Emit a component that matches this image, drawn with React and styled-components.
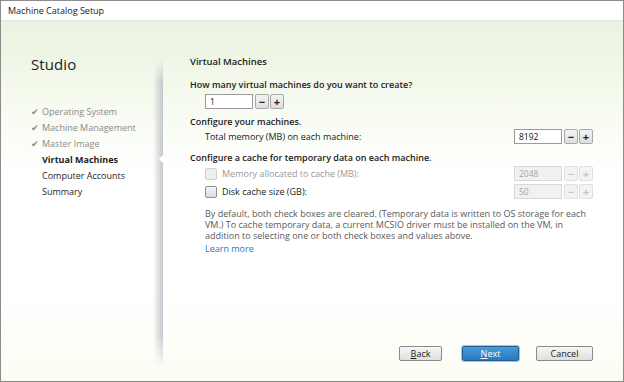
import React from 'react';
import styled, { createGlobalStyle, css } from 'styled-components';

const GlobalStyle = createGlobalStyle`
  html, body {
    margin: 0;
    padding: 0;
    background: #ffffff;
  }
  body {
    font-family: "Open Sans", "Noto Sans", sans-serif;
    font-size: 9px;
    color: #222;
  }
`;

const Window = styled.div`
  width: 622px;
  height: 380px;
  border: 1px solid #8c8c8c;
  display: flex;
  flex-direction: column;
  background: #fff;
`;

const TitleBar = styled.div`
  height: 19px;
  flex-shrink: 0;
  display: flex;
  align-items: center;
  padding-left: 7px;
  font-size: 9px;
  color: #1a1a1a;
  border-bottom: 1px solid #e6e9e2;
`;

const Body = styled.div`
  flex: 1;
  display: flex;
  background: linear-gradient(180deg, #eaf2df 0%, #f4f9ec 18%, #ffffff 42%, #ffffff 75%, #fbfdf3 100%);
`;

const Sidebar = styled.div`
  width: 162px;
  flex-shrink: 0;
  position: relative;
  padding: 33px 0 0 30px;
  box-sizing: border-box;

  &::after {
    content: '';
    position: absolute;
    right: 0;
    top: 38px;
    bottom: 14px;
    width: 10px;
    background: linear-gradient(90deg, rgba(200, 202, 208, 0) 0%, rgba(185, 188, 196, 0.85) 100%);
    -webkit-mask-image: linear-gradient(180deg, transparent 0%, #000 8%, #000 90%, transparent 100%);
    mask-image: linear-gradient(180deg, transparent 0%, #000 8%, #000 90%, transparent 100%);
  }
`;

const Brand = styled.div`
  font-size: 15px;
  color: #222;
  margin-bottom: 29px;
  letter-spacing: 0.1px;
`;

const Steps = styled.ul`
  list-style: none;
  margin: 0;
  padding: 0;
`;

const Step = styled.li`
  height: 16px;
  display: flex;
  align-items: center;
  font-size: 9px;
  color: ${(p) => (p.$done ? '#8a8a8a' : '#1e1e1e')};
  font-weight: ${(p) => (p.$active ? 700 : 400)};
  padding-left: ${(p) => (p.$done ? 0 : 11)}px;
`;

const Check = styled.span`
  width: 11px;
  color: #8a8a8a;
  font-size: 9px;
`;

const Pointer = styled.div`
  position: absolute;
  right: 0;
  top: 134px;
  width: 0;
  height: 0;
  border-top: 4px solid transparent;
  border-bottom: 4px solid transparent;
  border-right: 4px solid #ffffff;
  z-index: 1;
`;

const Content = styled.div`
  flex: 1;
  display: flex;
  flex-direction: column;
  padding: 34px 30px 20px 27px;
`;

const PageTitle = styled.div`
  font-size: 9.5px;
  font-weight: 600;
  color: #222;
  margin-bottom: 10px;
`;

const Heading = styled.div`
  font-size: 9px;
  font-weight: 600;
  color: #222;
  margin-bottom: ${(p) => p.$mb || 0}px;
`;

const Row = styled.div`
  display: flex;
  align-items: center;
  height: 15px;
  padding-left: 15px;
  margin-bottom: ${(p) => p.$mb || 0}px;
`;

const Label = styled.div`
  flex: 1;
  font-size: 9px;
  color: ${(p) => (p.$disabled ? '#999' : '#222')};
  display: flex;
  align-items: center;
  gap: 5px;
`;

const Spinner = styled.div`
  display: flex;
  align-items: center;
  gap: 1px;
`;

const NumberBox = styled.div`
  width: 42px;
  height: 13px;
  border: 1px solid ${(p) => (p.$disabled ? '#d8d8d8' : '#9a9a9a')};
  background: ${(p) => (p.$disabled ? '#f1f1f1' : '#fff')};
  color: ${(p) => (p.$disabled ? '#a5a5a5' : '#111')};
  font-size: 8.5px;
  line-height: 13px;
  padding-left: 4px;
  box-sizing: content-box;
  margin-right: 1px;
`;

const SpinButton = styled.div`
  width: 12px;
  height: 13px;
  border: 1px solid ${(p) => (p.$disabled ? '#e0e0e0' : '#a8a8a8')};
  border-radius: 2px;
  background: ${(p) => (p.$disabled ? '#f3f3f3' : 'linear-gradient(180deg, #f4f4f4 0%, #dedede 100%)')};
  color: ${(p) => (p.$disabled ? '#c4c4c4' : '#222')};
  display: flex;
  align-items: center;
  justify-content: center;
  font-size: 11px;
  font-weight: 700;
  line-height: 1;
`;

const Checkbox = styled.span`
  width: 10px;
  height: 10px;
  border: 1px solid ${(p) => (p.$disabled ? '#d0d0d0' : '#8e8e8e')};
  border-radius: 2px;
  background: ${(p) => (p.$disabled ? '#eeeeee' : 'linear-gradient(180deg, #f6f6f6 0%, #dcdcdc 100%)')};
  display: inline-block;
`;

const Note = styled.p`
  margin: 10px 0 0 15px;
  font-size: 9px;
  line-height: 10.8px;
  color: #5a5a5a;
`;

const Link = styled.a`
  display: block;
  margin: 1px 0 0 15px;
  font-size: 9px;
  color: #1f78c8;
  text-decoration: none;
`;

const Footer = styled.div`
  margin-top: auto;
  display: flex;
  justify-content: flex-end;
  align-items: center;
`;

const Button = styled.button`
  width: ${(p) => p.$w || 55}px;
  height: 13px;
  padding: 0;
  margin-left: ${(p) => p.$gap || 0}px;
  font-family: inherit;
  font-size: 9px;
  border-radius: 2px;
  border: 1px solid #8a8a8a;
  color: #222;
  background: linear-gradient(180deg, #f6f6f6 0%, #dfdfdf 100%);
  box-sizing: content-box;

  ${(p) =>
    p.$primary &&
    css`
      border-color: #1f5f99;
      color: #fff;
      background: linear-gradient(180deg, #4a9bd8 0%, #2a78be 100%);
      box-shadow: 0 0 0 1px #9cc7ea;
    `}
`;

const Mnemonic = styled.span`
  text-decoration: underline;
`;

const steps = [
  { label: 'Operating System', done: true },
  { label: 'Machine Management', done: true },
  { label: 'Master Image', done: true },
  { label: 'Virtual Machines', active: true },
  { label: 'Computer Accounts' },
  { label: 'Summary' },
];

function NumberInput({ value, disabled }) {
  return (
    <Spinner>
      <NumberBox $disabled={disabled}>{value}</NumberBox>
      <SpinButton $disabled={disabled}>−</SpinButton>
      <SpinButton $disabled={disabled}>+</SpinButton>
    </Spinner>
  );
}

export default function App() {
  return (
    <>
      <GlobalStyle />
      <Window>
        <TitleBar>Machine Catalog Setup</TitleBar>
        <Body>
          <Sidebar>
            <Brand>Studio</Brand>
            <Steps>
              {steps.map((s) => (
                <Step key={s.label} $done={s.done} $active={s.active}>
                  {s.done && <Check>✔</Check>}
                  {s.label}
                </Step>
              ))}
            </Steps>
            <Pointer />
          </Sidebar>
          <Content>
            <PageTitle>Virtual Machines</PageTitle>
            <Heading $mb={3}>How many virtual machines do you want to create?</Heading>
            <Row $mb={6}>
              <NumberInput value="1" />
            </Row>
            <Heading $mb={1}>Configure your machines.</Heading>
            <Row $mb={7}>
              <Label>Total memory (MB) on each machine:</Label>
              <NumberInput value="8192" />
            </Row>
            <Heading $mb={2}>Configure a cache for temporary data on each machine.</Heading>
            <Row $mb={3}>
              <Label $disabled>
                <Checkbox $disabled />
                Memory allocated to cache (MB):
              </Label>
              <NumberInput value="2048" disabled />
            </Row>
            <Row>
              <Label>
                <Checkbox />
                Disk cache size (GB):
              </Label>
              <NumberInput value="50" disabled />
            </Row>
            <Note>
              By default, both check boxes are cleared. (Temporary data is written to OS storage for each
              VM.) To cache temporary data, a current MCSIO driver must be installed on the VM, in
              addition to selecting one or both check boxes and values above.
            </Note>
            <Link href="#">Learn more</Link>
            <Footer>
              <Button $w={41}>
                <Mnemonic>B</Mnemonic>ack
              </Button>
              <Button $w={55} $gap={20} $primary>
                <Mnemonic>N</Mnemonic>ext
              </Button>
              <Button $w={55} $gap={17}>Cancel</Button>
            </Footer>
          </Content>
        </Body>
      </Window>
    </>
  );
}
